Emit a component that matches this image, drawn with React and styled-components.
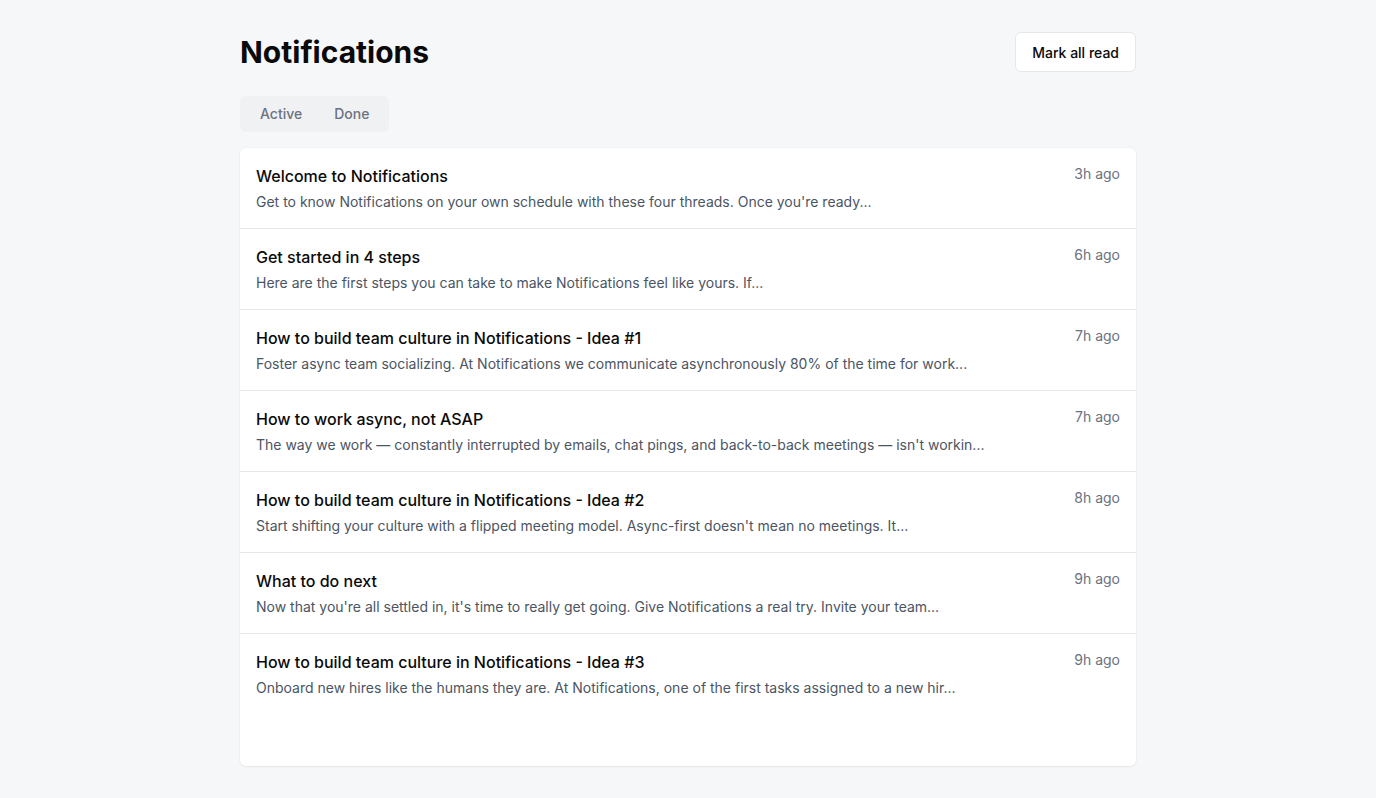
import React, { useState } from 'react';
import styled, { createGlobalStyle } from 'styled-components';

const GlobalStyle = createGlobalStyle`
  html, body {
    margin: 0;
    padding: 0;
    background: #f6f7f9;
    font-family: Inter, "Noto Sans", sans-serif;
    color: #0a0a0a;
  }
  * { box-sizing: border-box; }
`;

const Page = styled.div`
  height: 100vh;
  max-width: 896px;
  margin: 0 auto;
  padding: 32px 0;
  display: flex;
  flex-direction: column;
`;

const Header = styled.div`
  display: flex;
  align-items: center;
  justify-content: space-between;
  margin-bottom: 24px;
`;

const Title = styled.h1`
  margin: 0;
  font-size: 30px;
  line-height: 40px;
  font-weight: 700;
`;

const Button = styled.button`
  height: 40px;
  padding: 0 16px;
  background: #fff;
  border: 1px solid #e5e7eb;
  border-radius: 6px;
  font-family: inherit;
  font-size: 14px;
  font-weight: 500;
  color: #0a0a0a;
  cursor: pointer;
`;

const TabList = styled.div`
  display: inline-flex;
  align-self: flex-start;
  height: 36px;
  padding: 3px 4px 5px;
  background: #f0f1f3;
  border-radius: 6px;
  margin-bottom: 16px;
`;

const Tab = styled.button`
  border: none;
  background: ${p => (p.$active ? '#fff' : 'transparent')};
  padding: 0 16px;
  border-radius: 4px;
  font-family: inherit;
  font-size: 14px;
  font-weight: 500;
  color: #6b7280;
  cursor: pointer;
`;

const Card = styled.div`
  flex: 1;
  background: #fff;
  border-radius: 6px;
  box-shadow: 0 1px 2px rgba(0, 0, 0, 0.06), 0 0 0 1px rgba(0, 0, 0, 0.02);
  overflow: hidden;
`;

const Row = styled.div`
  display: flex;
  justify-content: space-between;
  gap: 16px;
  padding: 16px;
  border-bottom: 1px solid #e5e7eb;
  &:last-child { border-bottom: none; }
`;

const Body = styled.div`
  min-width: 0;
`;

const RowTitle = styled.div`
  font-size: 16px;
  line-height: 24px;
  font-weight: 500;
  margin-bottom: 4px;
`;

const Preview = styled.div`
  font-size: 14px;
  line-height: 20px;
  color: #4b5563;
`;

const Time = styled.div`
  font-size: 14px;
  line-height: 20px;
  color: #6b7280;
  white-space: nowrap;
`;

const items = [
  {
    title: 'Welcome to Notifications',
    text: "Get to know Notifications on your own schedule with these four threads. Once you're ready...",
    time: '3h ago',
  },
  {
    title: 'Get started in 4 steps',
    text: 'Here are the first steps you can take to make Notifications feel like yours. If...',
    time: '6h ago',
  },
  {
    title: 'How to build team culture in Notifications - Idea #1',
    text: 'Foster async team socializing. At Notifications we communicate asynchronously 80% of the time for work...',
    time: '7h ago',
  },
  {
    title: 'How to work async, not ASAP',
    text: "The way we work \u2014 constantly interrupted by emails, chat pings, and back-to-back meetings \u2014 isn't workin...",
    time: '7h ago',
  },
  {
    title: 'How to build team culture in Notifications - Idea #2',
    text: "Start shifting your culture with a flipped meeting model. Async-first doesn't mean no meetings. It...",
    time: '8h ago',
  },
  {
    title: 'What to do next',
    text: "Now that you're all settled in, it's time to really get going. Give Notifications a real try. Invite your team...",
    time: '9h ago',
  },
  {
    title: 'How to build team culture in Notifications - Idea #3',
    text: 'Onboard new hires like the humans they are. At Notifications, one of the first tasks assigned to a new hir...',
    time: '9h ago',
  },
];

const App = () => {
  const [tab, setTab] = useState(null);

  return (
    <>
      <GlobalStyle />
      <Page>
        <Header>
          <Title>Notifications</Title>
          <Button>Mark all read</Button>
        </Header>
        <TabList>
          <Tab $active={tab === 'active'} onClick={() => setTab('active')}>Active</Tab>
          <Tab $active={tab === 'done'} onClick={() => setTab('done')}>Done</Tab>
        </TabList>
        <Card>
          {items.map((item, index) => (
            <Row key={index}>
              <Body>
                <RowTitle>{item.title}</RowTitle>
                <Preview>{item.text}</Preview>
              </Body>
              <Time>{item.time}</Time>
            </Row>
          ))}
        </Card>
      </Page>
    </>
  );
};

export default App;
